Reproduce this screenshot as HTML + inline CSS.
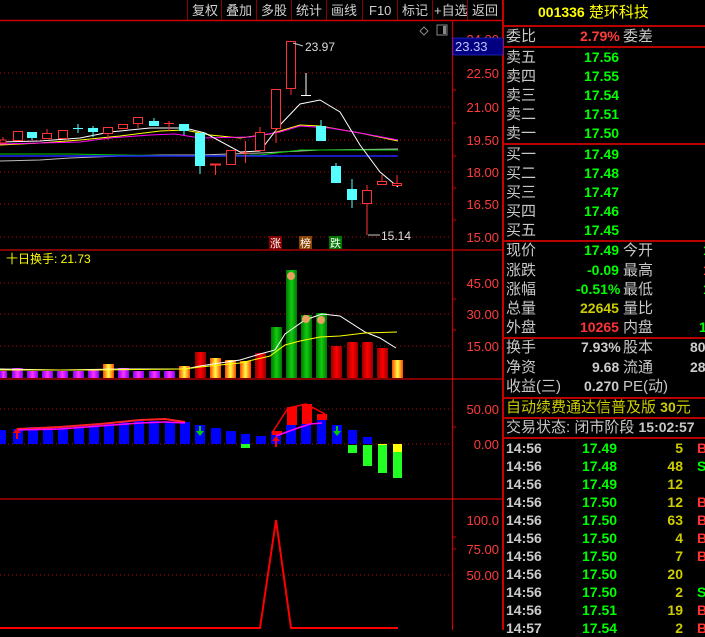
<!DOCTYPE html>
<html><head><meta charset="utf-8"><style>
*{margin:0;padding:0}
body{width:705px;height:630px;background:#000;overflow:hidden;position:relative;font-family:"Liberation Sans","Noto Sans CJK SC",sans-serif}
svg{position:absolute;left:0;top:0}
.rp{position:absolute;left:504px;top:0;width:201px;height:630px;font-family:"Liberation Sans","WenQuanYi Zen Hei",sans-serif}
.r{position:absolute;height:19px;line-height:19px;font-size:15px;color:#c8c8c8;white-space:nowrap}
.n{font-weight:bold;font-size:14px}
.hl{position:absolute;left:0;width:201px;height:2px;background:#b00}
</style></head><body>
<svg width="504" height="630" viewBox="0 0 504 630" font-family="Liberation Sans, sans-serif">
<!-- toolbar -->
<line x1="0" y1="20.5" x2="504" y2="20.5" stroke="#c00" stroke-width="1.5"/>
<g stroke="#800" stroke-width="1">
<line x1="187.5" y1="0" x2="187.5" y2="20"/><line x1="221.5" y1="0" x2="221.5" y2="20"/><line x1="256.5" y1="0" x2="256.5" y2="20"/><line x1="291.5" y1="0" x2="291.5" y2="20"/><line x1="326.5" y1="0" x2="326.5" y2="20"/><line x1="362.5" y1="0" x2="362.5" y2="20"/><line x1="397.5" y1="0" x2="397.5" y2="20"/><line x1="432.5" y1="0" x2="432.5" y2="20"/><line x1="467.5" y1="0" x2="467.5" y2="20"/>
</g>
<g fill="#d0d0d0" font-size="13" font-family="Liberation Sans, WenQuanYi Zen Hei, sans-serif">
<text x="192" y="15">复权</text><text x="226" y="15">叠加</text><text x="261" y="15">多股</text><text x="296" y="15">统计</text><text x="331" y="15">画线</text><text x="369" y="15">F10</text><text x="402" y="15">标记</text><text x="434" y="15">+自选</text><text x="472" y="15">返回</text>
</g>
<!-- pane borders -->
<g stroke="#c00" stroke-width="1.2">
<line x1="0" y1="250" x2="504" y2="250"/><line x1="0" y1="379" x2="504" y2="379"/><line x1="0" y1="499" x2="504" y2="499"/>
<line x1="452.5" y1="21" x2="452.5" y2="630"/>
</g>
<line x1="503" y1="0" x2="503" y2="630" stroke="#c00" stroke-width="2"/>
<!-- grid -->
<g stroke="#b00" stroke-dasharray="1,3">
<line x1="0" y1="73" x2="452" y2="73"/><line x1="0" y1="107" x2="452" y2="107"/><line x1="0" y1="140" x2="452" y2="140"/><line x1="0" y1="172" x2="452" y2="172"/><line x1="0" y1="204" x2="452" y2="204"/><line x1="0" y1="237" x2="452" y2="237"/>
<line x1="0" y1="283" x2="452" y2="283"/><line x1="0" y1="314" x2="452" y2="314"/><line x1="0" y1="346" x2="452" y2="346"/>
<line x1="0" y1="409" x2="452" y2="409"/><line x1="0" y1="444" x2="452" y2="444"/>
<line x1="0" y1="575" x2="452" y2="575"/>
</g>
<!-- axis ticks -->
<g stroke="#c00"><line x1="452" y1="90" x2="456" y2="90"/><line x1="452" y1="123" x2="456" y2="123"/><line x1="452" y1="156" x2="456" y2="156"/><line x1="452" y1="188" x2="456" y2="188"/><line x1="452" y1="220" x2="456" y2="220"/><line x1="452" y1="299" x2="456" y2="299"/><line x1="452" y1="330" x2="456" y2="330"/><line x1="452" y1="427" x2="456" y2="427"/><line x1="452" y1="537" x2="456" y2="537"/><line x1="452" y1="549" x2="456" y2="549"/></g>
<g fill="#ff3c3c" font-size="13" text-anchor="end">
<text x="499" y="44">24.00</text>
<text x="499" y="78">22.50</text><text x="499" y="112">21.00</text><text x="499" y="145">19.50</text><text x="499" y="177">18.00</text><text x="499" y="209">16.50</text><text x="499" y="242">15.00</text>
<text x="499" y="288">45.00</text><text x="499" y="319">30.00</text><text x="499" y="351">15.00</text>
<text x="499" y="414">50.00</text><text x="499" y="449">0.00</text>
<text x="499" y="525">100.0</text><text x="499" y="554">75.00</text><text x="499" y="580">50.00</text>
</g>
<rect x="453" y="38" width="50" height="17" fill="#000080" stroke="#33f" stroke-width="0.6"/>
<text x="455" y="51" fill="#c0c0ff" font-size="13">23.33</text>
<!-- top icons -->
<path d="M424 27 l4 4 -4 4 -4 -4z" fill="none" stroke="#888"/>
<rect x="437" y="25" width="10" height="10" fill="none" stroke="#888"/><rect x="443" y="26" width="3" height="8" fill="#888"/>
<!-- MA lines -->
<polyline points="0,161 40,160 70,158 120,156 160,155 200,155 260,153 320,150 398,149" fill="none" stroke="#bbb"/>
<polyline points="0,154 70,154 120,155 200,156 260,155 300,150 398,150" fill="none" stroke="#0c0"/>
<line x1="0" y1="156" x2="398" y2="156" stroke="#22f" stroke-width="1.5"/>
<polyline points="0,145 40,143 80,140 120,136 160,131 185,130 210,135 240,138 270,134 300,125 320,126 360,133 398,141" fill="none" stroke="#ff0"/>
<polyline points="0,144 40,143 80,142 110,138 150,135 175,134 200,138 250,137 280,132 300,126 330,128 360,133 398,140" fill="none" stroke="#f0f"/>
<polyline points="0,142 40,141 80,138 110,132 150,128 185,128 205,133 240,152 260,151 280,125 300,104 320,100 340,112 360,145 380,172 398,187" fill="none" stroke="#fff"/>
<!-- candles -->
<g stroke="#f33" fill="#000" stroke-width="1">
<rect x="0" y="140" width="6" height="3"/><line x1="3" y1="137" x2="3" y2="140"/>
<rect x="13.5" y="131.5" width="9" height="9"/><rect x="42.5" y="133.5" width="9" height="5"/><line x1="47" y1="129" x2="47" y2="133"/>
<rect x="58.5" y="130.5" width="9" height="8"/><rect x="103.5" y="127.5" width="9" height="6"/><line x1="108" y1="134" x2="108" y2="140"/>
<rect x="118.5" y="124.5" width="9" height="4"/><rect x="133.5" y="117.5" width="9" height="6"/><line x1="138" y1="124" x2="138" y2="128"/>
<line x1="164" y1="123.5" x2="174" y2="123.5"/><line x1="169" y1="121" x2="169" y2="131"/>
<line x1="210" y1="164.5" x2="221" y2="164.5" stroke-width="2"/><line x1="215.5" y1="164" x2="215.5" y2="175"/>
<rect x="226.5" y="150.5" width="9" height="14"/>
<line x1="240" y1="153" x2="250" y2="153"/><line x1="245.5" y1="141" x2="245.5" y2="163"/>
<rect x="255.5" y="132.5" width="9" height="18"/><line x1="260" y1="127" x2="260" y2="132"/>
<rect x="271.5" y="89.5" width="9" height="39"/><line x1="276" y1="129" x2="276" y2="143"/>
<rect x="286.5" y="41.5" width="9" height="47"/><line x1="291" y1="88" x2="291" y2="95"/>
<rect x="362.5" y="190.5" width="9" height="13"/><line x1="367" y1="185" x2="367" y2="190"/><line x1="367" y1="203" x2="367" y2="235"/>
<rect x="377.5" y="181.5" width="9" height="3"/><line x1="382" y1="175" x2="382" y2="181"/>
<rect x="392.5" y="183.5" width="9" height="2"/><line x1="397" y1="175" x2="397" y2="183"/>
</g>
<g fill="#5ff" stroke="#5ff">
<rect x="27.5" y="132.5" width="9" height="5"/><line x1="32" y1="137" x2="32" y2="140"/>
<line x1="73" y1="128.5" x2="83" y2="128.5"/><line x1="78" y1="124" x2="78" y2="133"/>
<rect x="88.5" y="128.5" width="9" height="3"/><line x1="93" y1="126" x2="93" y2="137"/>
<rect x="149.5" y="121.5" width="9" height="4"/><line x1="154" y1="118" x2="154" y2="121"/>
<rect x="179.5" y="124.5" width="9" height="6"/><line x1="184" y1="131" x2="184" y2="135"/>
<rect x="195.5" y="133.5" width="9" height="32"/><line x1="200" y1="166" x2="200" y2="174"/>
<rect x="316.5" y="126.5" width="9" height="14"/><line x1="321" y1="120" x2="321" y2="126"/>
<rect x="331.5" y="166.5" width="9" height="16"/><line x1="336" y1="163" x2="336" y2="166"/>
<rect x="347.5" y="189.5" width="9" height="10"/><line x1="352" y1="179" x2="352" y2="208"/>
</g>
<g stroke="#fff"><line x1="306" y1="73" x2="306" y2="95"/><line x1="301" y1="95.5" x2="311" y2="95.5"/></g>
<g fill="#ddd" font-size="12"><text x="305" y="51">23.97</text><text x="381" y="240">15.14</text></g>
<g stroke="#ccc"><line x1="293" y1="43" x2="303" y2="46"/><line x1="368" y1="235" x2="380" y2="235"/></g>
<rect x="269" y="236" width="13" height="13" fill="#800"/><rect x="299" y="236" width="13" height="13" fill="#840"/><rect x="329" y="236" width="13" height="13" fill="#070"/>
<g fill="#fff" font-size="11" font-family="WenQuanYi Zen Hei, sans-serif"><text x="270" y="247">涨</text><text x="300" y="247">榜</text><text x="330" y="247">跌</text></g>
<!-- volume -->
<defs>
<linearGradient id="pu" x1="0" x2="1"><stop offset="0" stop-color="#80f"/><stop offset=".5" stop-color="#f3f"/><stop offset="1" stop-color="#80f"/></linearGradient>
<linearGradient id="or" x1="0" x2="1"><stop offset="0" stop-color="#f40"/><stop offset=".5" stop-color="#ff4"/><stop offset="1" stop-color="#f40"/></linearGradient>
<linearGradient id="rd" x1="0" x2="1"><stop offset="0" stop-color="#900"/><stop offset=".5" stop-color="#f00"/><stop offset="1" stop-color="#900"/></linearGradient>
<linearGradient id="gr" x1="0" x2="1"><stop offset="0" stop-color="#070"/><stop offset=".5" stop-color="#1c1"/><stop offset="1" stop-color="#070"/></linearGradient>
</defs>
<g>
<rect x="0" y="371" width="7" height="7" fill="url(#pu)"/><rect x="12" y="368" width="11" height="10" fill="url(#pu)"/><rect x="27" y="371" width="11" height="7" fill="url(#pu)"/><rect x="42" y="371" width="11" height="7" fill="url(#pu)"/><rect x="57" y="371" width="11" height="7" fill="url(#pu)"/><rect x="73" y="371" width="11" height="7" fill="url(#pu)"/><rect x="88" y="369" width="11" height="9" fill="url(#pu)"/><rect x="103" y="364" width="11" height="14" fill="url(#or)"/><rect x="118" y="368" width="11" height="10" fill="url(#pu)"/><rect x="133" y="371" width="11" height="7" fill="url(#pu)"/><rect x="149" y="371" width="11" height="7" fill="url(#pu)"/><rect x="164" y="371" width="11" height="7" fill="url(#pu)"/><rect x="179" y="366" width="11" height="12" fill="url(#or)"/><rect x="195" y="352" width="11" height="26" fill="url(#rd)"/><rect x="210" y="358" width="11" height="20" fill="url(#or)"/><rect x="225" y="360" width="11" height="18" fill="url(#or)"/><rect x="240" y="361" width="11" height="17" fill="url(#or)"/><rect x="255" y="353" width="11" height="25" fill="url(#rd)"/><rect x="271" y="327" width="11" height="51" fill="url(#gr)"/><rect x="286" y="270" width="11" height="108" fill="url(#gr)"/><rect x="301" y="315" width="11" height="63" fill="url(#gr)"/><rect x="316" y="313" width="11" height="65" fill="url(#gr)"/><rect x="331" y="346" width="11" height="32" fill="url(#rd)"/><rect x="347" y="342" width="11" height="36" fill="url(#rd)"/><rect x="362" y="342" width="11" height="36" fill="url(#rd)"/><rect x="377" y="348" width="11" height="30" fill="url(#rd)"/><rect x="392" y="360" width="11" height="18" fill="url(#or)"/>
</g>
<polyline points="0,369 60,370 120,369 185,369 200,366 240,360 260,354 275,350 285,334 305,320 322,314 340,316 365,332 380,338 396,348" fill="none" stroke="#fff"/>
<polyline points="0,370 100,370 185,369 200,367 240,363 270,356 285,345 300,341 320,337 340,336 365,333 397,332" fill="none" stroke="#ff0"/>
<g fill="#e8a060"><circle cx="291" cy="276" r="4"/><circle cx="306" cy="319" r="4"/><circle cx="321" cy="320" r="4"/></g>
<text x="6" y="263" fill="#ff0" font-size="12" font-family="Liberation Sans, WenQuanYi Zen Hei, sans-serif">十日换手: 21.73</text>
<!-- MACD -->
<g fill="#00f">
<rect x="0" y="430" width="6" height="14"/><rect x="13" y="429" width="10" height="15"/><rect x="28" y="427" width="10" height="17"/><rect x="43" y="427" width="10" height="17"/><rect x="58" y="426" width="10" height="18"/><rect x="74" y="425" width="10" height="19"/><rect x="89" y="424" width="10" height="20"/><rect x="104" y="423" width="10" height="21"/><rect x="119" y="422" width="10" height="22"/><rect x="134" y="421" width="10" height="23"/><rect x="149" y="421" width="10" height="23"/><rect x="165" y="422" width="10" height="22"/><rect x="180" y="422" width="10" height="22"/><rect x="195" y="425" width="10" height="19"/><rect x="211" y="428" width="10" height="16"/><rect x="226" y="431" width="10" height="13"/><rect x="241" y="434" width="9" height="10"/><rect x="256" y="436" width="10" height="8"/><rect x="271" y="431" width="10" height="13"/><rect x="286" y="425" width="10" height="19"/><rect x="301" y="424" width="10" height="20"/><rect x="317" y="420" width="9" height="24"/><rect x="332" y="425" width="10" height="19"/><rect x="348" y="430" width="9" height="14"/><rect x="363" y="437" width="9" height="7"/>
</g>
<g fill="#f00"><rect x="272" y="431" width="10" height="4"/><rect x="287" y="407" width="10" height="18"/><rect x="302" y="404" width="10" height="20"/><rect x="317" y="414" width="10" height="6"/></g>
<polyline points="272,433 288,408 306,404 325,414" fill="none" stroke="#f00" stroke-width="1.5"/>
<g fill="#2f2"><rect x="241" y="444" width="9" height="4"/><rect x="348" y="445" width="9" height="8"/><rect x="363" y="445" width="9" height="21"/><rect x="378" y="445" width="9" height="28"/><rect x="393" y="452" width="9" height="26"/></g>
<g fill="#ff0"><rect x="378" y="444" width="9" height="1"/><rect x="393" y="444" width="9" height="8"/></g>
<polyline points="17,429 60,427 100,424 140,420 165,419 185,422" fill="none" stroke="#f22" stroke-width="2"/>
<polyline points="17,430 60,429 100,426 140,423 165,422 185,423" fill="none" stroke="#f0f" stroke-width="1.5"/>
<polyline points="276,436 295,429 310,424 322,423" fill="none" stroke="#f0f" stroke-width="1.5"/>
<g fill="#f00"><path d="M17 428 l-4 5 h3 v6 h2 v-6 h3z"/><path d="M276 436 l-4 5 h3 v6 h2 v-6 h3z"/></g>
<g fill="#0c0"><path d="M199 426 v5 h-3 l4 5 4 -5 h-3 v-5z"/><path d="M336 426 v5 h-3 l4 5 4 -5 h-3 v-5z"/></g>
<!-- bottom -->
<polyline points="0,628 260,628 276,520 291,628 398,628" fill="none" stroke="#f00" stroke-width="2"/>
</svg>
<div class="rp">
<div class="r" style="left:34px;top:3px;color:#ff0;font-size:15px"><b style="font-size:14px">001336</b> 楚环科技</div>
<div class="hl" style="top:25px"></div>
<div class="r" style="left:2px;top:27px">委比</div><div class="r n" style="left:76px;top:27px;color:#ff3c3c">2.79%</div><div class="r" style="left:119px;top:27px">委差</div>
<div class="hl" style="top:46px"></div>
<div class="r" style="left:2px;top:48px">卖五</div><div class="r n" style="left:80px;top:48px;color:#0f0">17.56</div>
<div class="r" style="left:2px;top:67px">卖四</div><div class="r n" style="left:80px;top:67px;color:#0f0">17.55</div>
<div class="r" style="left:2px;top:86px">卖三</div><div class="r n" style="left:80px;top:86px;color:#0f0">17.54</div>
<div class="r" style="left:2px;top:105px">卖二</div><div class="r n" style="left:80px;top:105px;color:#0f0">17.51</div>
<div class="r" style="left:2px;top:124px">卖一</div><div class="r n" style="left:80px;top:124px;color:#0f0">17.50</div>
<div class="hl" style="top:143px"></div>
<div class="r" style="left:2px;top:145px">买一</div><div class="r n" style="left:80px;top:145px;color:#0f0">17.49</div>
<div class="r" style="left:2px;top:164px">买二</div><div class="r n" style="left:80px;top:164px;color:#0f0">17.48</div>
<div class="r" style="left:2px;top:183px">买三</div><div class="r n" style="left:80px;top:183px;color:#0f0">17.47</div>
<div class="r" style="left:2px;top:202px">买四</div><div class="r n" style="left:80px;top:202px;color:#0f0">17.46</div>
<div class="r" style="left:2px;top:221px">买五</div><div class="r n" style="left:80px;top:221px;color:#0f0">17.45</div>
<div class="hl" style="top:240px"></div>
<div class="r" style="left:2px;top:241px">现价</div><div class="r n" style="left:80px;top:241px;color:#0f0">17.49</div><div class="r" style="left:119px;top:241px">今开</div><div class="r n" style="left:199px;top:241px;color:#0f0">1</div>
<div class="r" style="left:2px;top:261px">涨跌</div><div class="r n" style="left:83px;top:261px;color:#0f0">-0.09</div><div class="r" style="left:119px;top:261px">最高</div><div class="r n" style="left:199px;top:261px;color:#f33">1</div>
<div class="r" style="left:2px;top:280px">涨幅</div><div class="r n" style="left:72px;top:280px;color:#0f0">-0.51%</div><div class="r" style="left:119px;top:280px">最低</div><div class="r n" style="left:199px;top:280px;color:#0f0">1</div>
<div class="r" style="left:2px;top:299px">总量</div><div class="r n" style="left:76px;top:299px;color:#cc0">22645</div><div class="r" style="left:119px;top:299px">量比</div>
<div class="r" style="left:2px;top:318px">外盘</div><div class="r n" style="left:76px;top:318px;color:#f33">10265</div><div class="r" style="left:119px;top:318px">内盘</div><div class="r n" style="left:195px;top:318px;color:#0f0">1</div>
<div class="hl" style="top:337px"></div>
<div class="r" style="left:2px;top:338px">换手</div><div class="r n" style="left:77px;top:338px;color:#ccc">7.93%</div><div class="r" style="left:119px;top:338px">股本</div><div class="r n" style="left:186px;top:338px;color:#ccc">80</div>
<div class="r" style="left:2px;top:358px">净资</div><div class="r n" style="left:88px;top:358px;color:#ccc">9.68</div><div class="r" style="left:119px;top:358px">流通</div><div class="r n" style="left:186px;top:358px;color:#ccc">28</div>
<div class="r" style="left:2px;top:377px">收益(三)</div><div class="r n" style="left:80px;top:377px;color:#ccc">0.270</div><div class="r" style="left:119px;top:377px">PE(动)</div>
<div class="hl" style="top:397px"></div>
<div class="r" style="left:2px;top:398px;color:#cc0">自动续费通达信普及版 <b style="font-size:14px">30</b>元</div>
<div class="hl" style="top:417px"></div>
<div class="r" style="left:2px;top:418px">交易状态: 闭市阶段 <b style="font-size:14px">15:02:57</b></div>
<div class="hl" style="top:437px"></div>
<div style="position:absolute;left:2px;top:439px;width:199px;font-size:14px;font-weight:bold;line-height:18px">
<div style="position:relative;height:18px"><span style="color:#ccc">14:56</span><span style="position:absolute;left:76px;color:#0f0">17.49</span><span style="position:absolute;right:22px;color:#cc0">5</span><span style="position:absolute;left:191px;color:#f33">B</span></div>
<div style="position:relative;height:18px"><span style="color:#ccc">14:56</span><span style="position:absolute;left:76px;color:#0f0">17.48</span><span style="position:absolute;right:22px;color:#cc0">48</span><span style="position:absolute;left:191px;color:#0f0">S</span></div>
<div style="position:relative;height:18px"><span style="color:#ccc">14:56</span><span style="position:absolute;left:76px;color:#0f0">17.49</span><span style="position:absolute;right:22px;color:#cc0">12</span></div>
<div style="position:relative;height:18px"><span style="color:#ccc">14:56</span><span style="position:absolute;left:76px;color:#0f0">17.50</span><span style="position:absolute;right:22px;color:#cc0">12</span><span style="position:absolute;left:191px;color:#f33">B</span></div>
<div style="position:relative;height:18px"><span style="color:#ccc">14:56</span><span style="position:absolute;left:76px;color:#0f0">17.50</span><span style="position:absolute;right:22px;color:#cc0">63</span><span style="position:absolute;left:191px;color:#f33">B</span></div>
<div style="position:relative;height:18px"><span style="color:#ccc">14:56</span><span style="position:absolute;left:76px;color:#0f0">17.50</span><span style="position:absolute;right:22px;color:#cc0">4</span><span style="position:absolute;left:191px;color:#f33">B</span></div>
<div style="position:relative;height:18px"><span style="color:#ccc">14:56</span><span style="position:absolute;left:76px;color:#0f0">17.50</span><span style="position:absolute;right:22px;color:#cc0">7</span><span style="position:absolute;left:191px;color:#f33">B</span></div>
<div style="position:relative;height:18px"><span style="color:#ccc">14:56</span><span style="position:absolute;left:76px;color:#0f0">17.50</span><span style="position:absolute;right:22px;color:#cc0">20</span></div>
<div style="position:relative;height:18px"><span style="color:#ccc">14:56</span><span style="position:absolute;left:76px;color:#0f0">17.50</span><span style="position:absolute;right:22px;color:#cc0">2</span><span style="position:absolute;left:191px;color:#0f0">S</span></div>
<div style="position:relative;height:18px"><span style="color:#ccc">14:56</span><span style="position:absolute;left:76px;color:#0f0">17.51</span><span style="position:absolute;right:22px;color:#cc0">19</span><span style="position:absolute;left:191px;color:#f33">B</span></div>
<div style="position:relative;height:18px"><span style="color:#ccc">14:57</span><span style="position:absolute;left:76px;color:#0f0">17.54</span><span style="position:absolute;right:22px;color:#cc0">2</span><span style="position:absolute;left:191px;color:#f33">B</span></div>
</div>
</div>
</body></html>
